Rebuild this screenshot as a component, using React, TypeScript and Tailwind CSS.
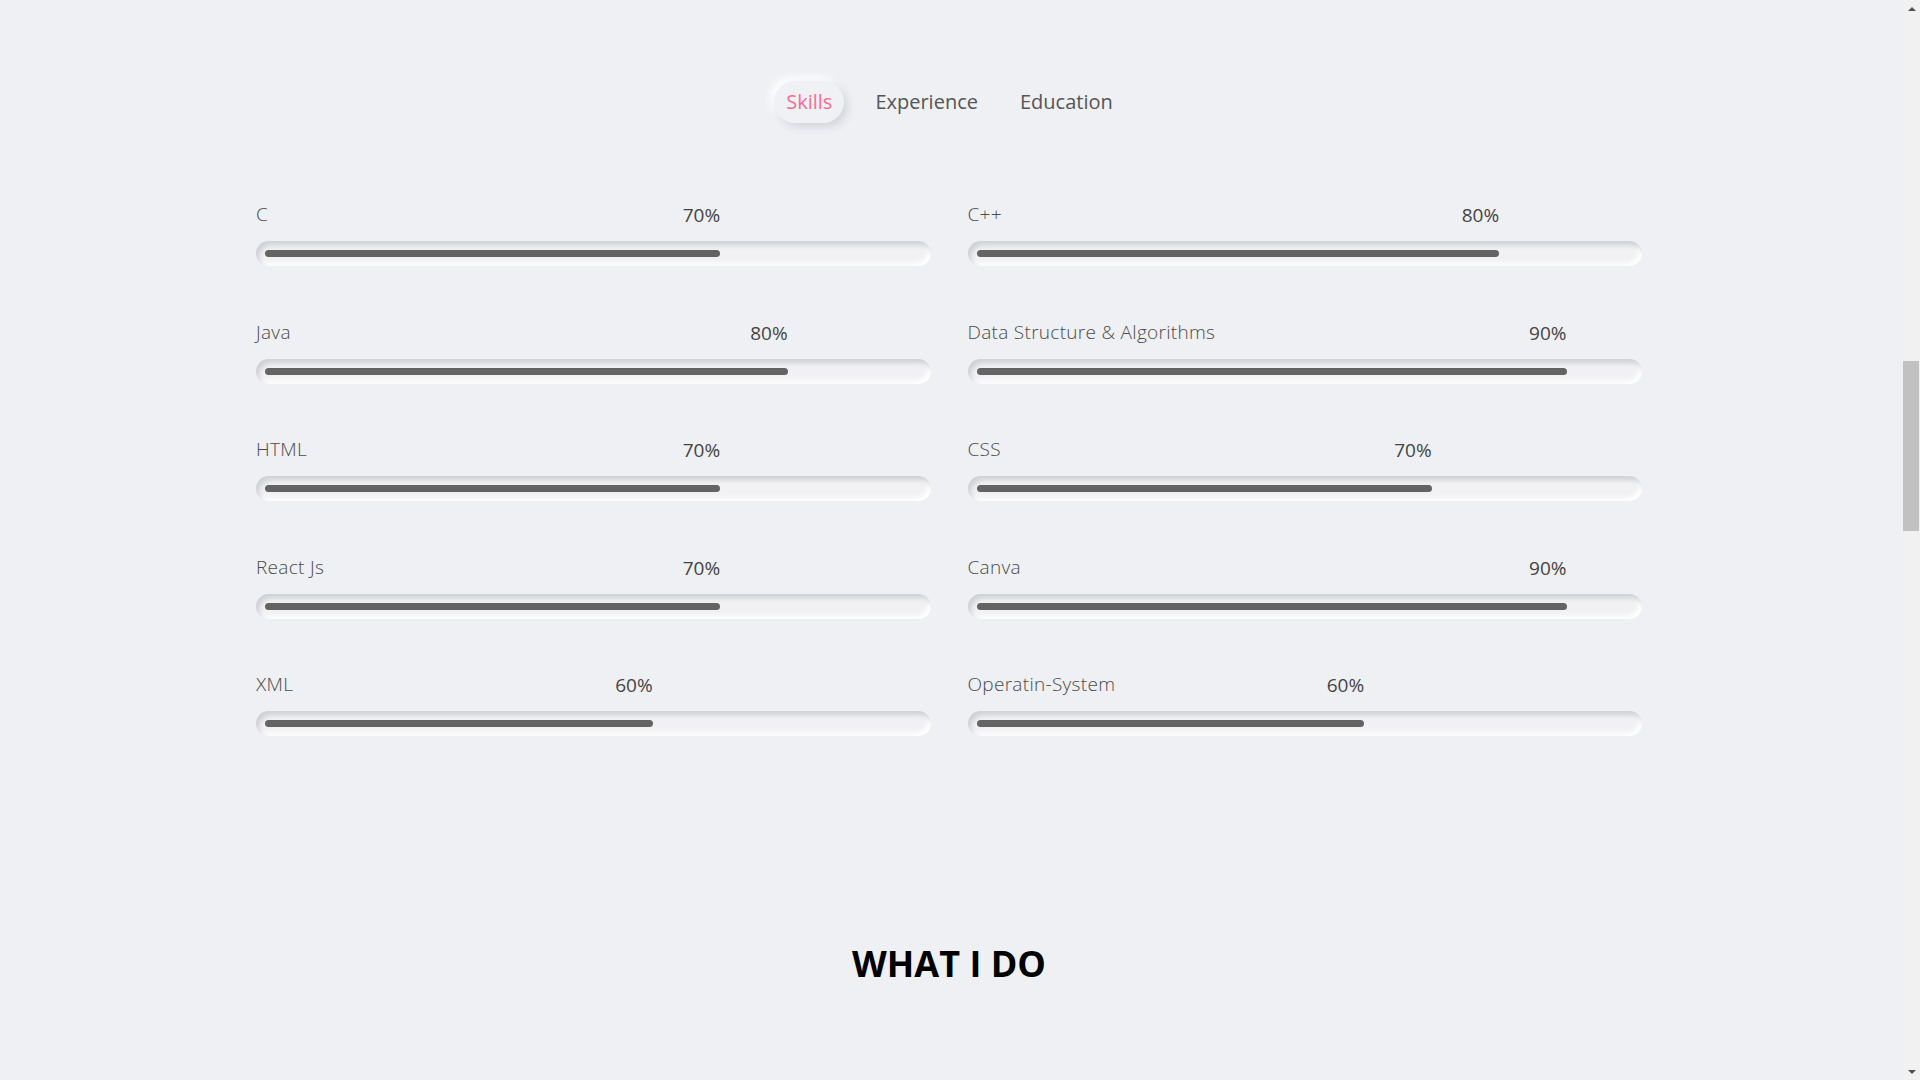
const skills = [
  { name: 'C', pct: 70 },
  { name: 'C++', pct: 80 },
  { name: 'Java', pct: 80 },
  { name: 'Data Structure & Algorithms', pct: 90 },
  { name: 'HTML', pct: 70 },
  { name: 'CSS', pct: 70 },
  { name: 'React Js', pct: 70 },
  { name: 'Canva', pct: 90 },
  { name: 'XML', pct: 60 },
  { name: 'Operatin-System', pct: 60 },
]

function SkillBar({ name, pct }: { name: string; pct: number }) {
  const w = `calc(${pct}% - 17px)`
  return (
    <div>
      <div className="grid h-6 items-center text-[19px] leading-6">
        <span className="[grid-area:1/1] font-light tracking-[0.3px] text-[#4a4a4a]">{name}</span>
        <div className="[grid-area:1/1] ml-[9px] translate-y-[1px] text-right text-[#444]" style={{ width: w }}>
          {pct}%
        </div>
      </div>
      <div className="mt-[15px] flex h-[25px] items-center rounded-full bg-[#f1f1f3] shadow-[inset_3px_4px_5px_#cfd0d4,inset_-3px_-3px_5px_#ffffff]">
        <div className="ml-[9px] h-[7px] rounded-full bg-[#636363]" style={{ width: w }} />
      </div>
    </div>
  )
}

function Scrollbar() {
  return (
    <div className="flex w-[17px] shrink-0 flex-col bg-[#f1f1f1]">
      <div className="flex h-[17px] items-center justify-center">
        <div className="h-0 w-0 border-x-[4px] border-b-[4px] border-x-transparent border-b-[#505050]" />
      </div>
      <div className="flex-1 pl-0 pr-[1px]">
        <div className="mt-[344px] h-[170px] bg-[#c1c1c1]" />
      </div>
      <div className="flex h-[17px] items-center justify-center">
        <div className="h-0 w-0 border-x-[4px] border-t-[4px] border-x-transparent border-t-[#505050]" />
      </div>
    </div>
  )
}

export default function App() {
  return (
    <div className="flex h-screen overflow-hidden bg-[#eff0f4] font-['Open_Sans','Noto_Sans',sans-serif]">
      <main className="flex-1 pr-[5px] pt-[81px]">
        <div className="flex justify-center gap-[20px] text-[20px]">
          <button className="h-[42px] rounded-full bg-[#f0f1f5] px-[12px] text-[#ff6b8d] shadow-[4px_4px_8px_#d4d5da,-4px_-4px_8px_#ffffff]">
            Skills
          </button>
          <button className="h-[42px] rounded-full px-[11px] text-[#555]">Experience</button>
          <button className="h-[42px] rounded-full px-[11px] text-[#555]">Education</button>
        </div>

        <div className="mx-auto mt-[79px] grid w-[1386px] grid-cols-2 gap-x-[37px] gap-y-[53.5px]">
          {skills.map((s) => (
            <SkillBar key={s.name} name={s.name} pct={s.pct} />
          ))}
        </div>

        <h2 className="mt-[206px] text-center text-[36px] font-bold leading-[44px] text-black">
          WHAT I DO
        </h2>
      </main>
      <Scrollbar />
    </div>
  )
}
